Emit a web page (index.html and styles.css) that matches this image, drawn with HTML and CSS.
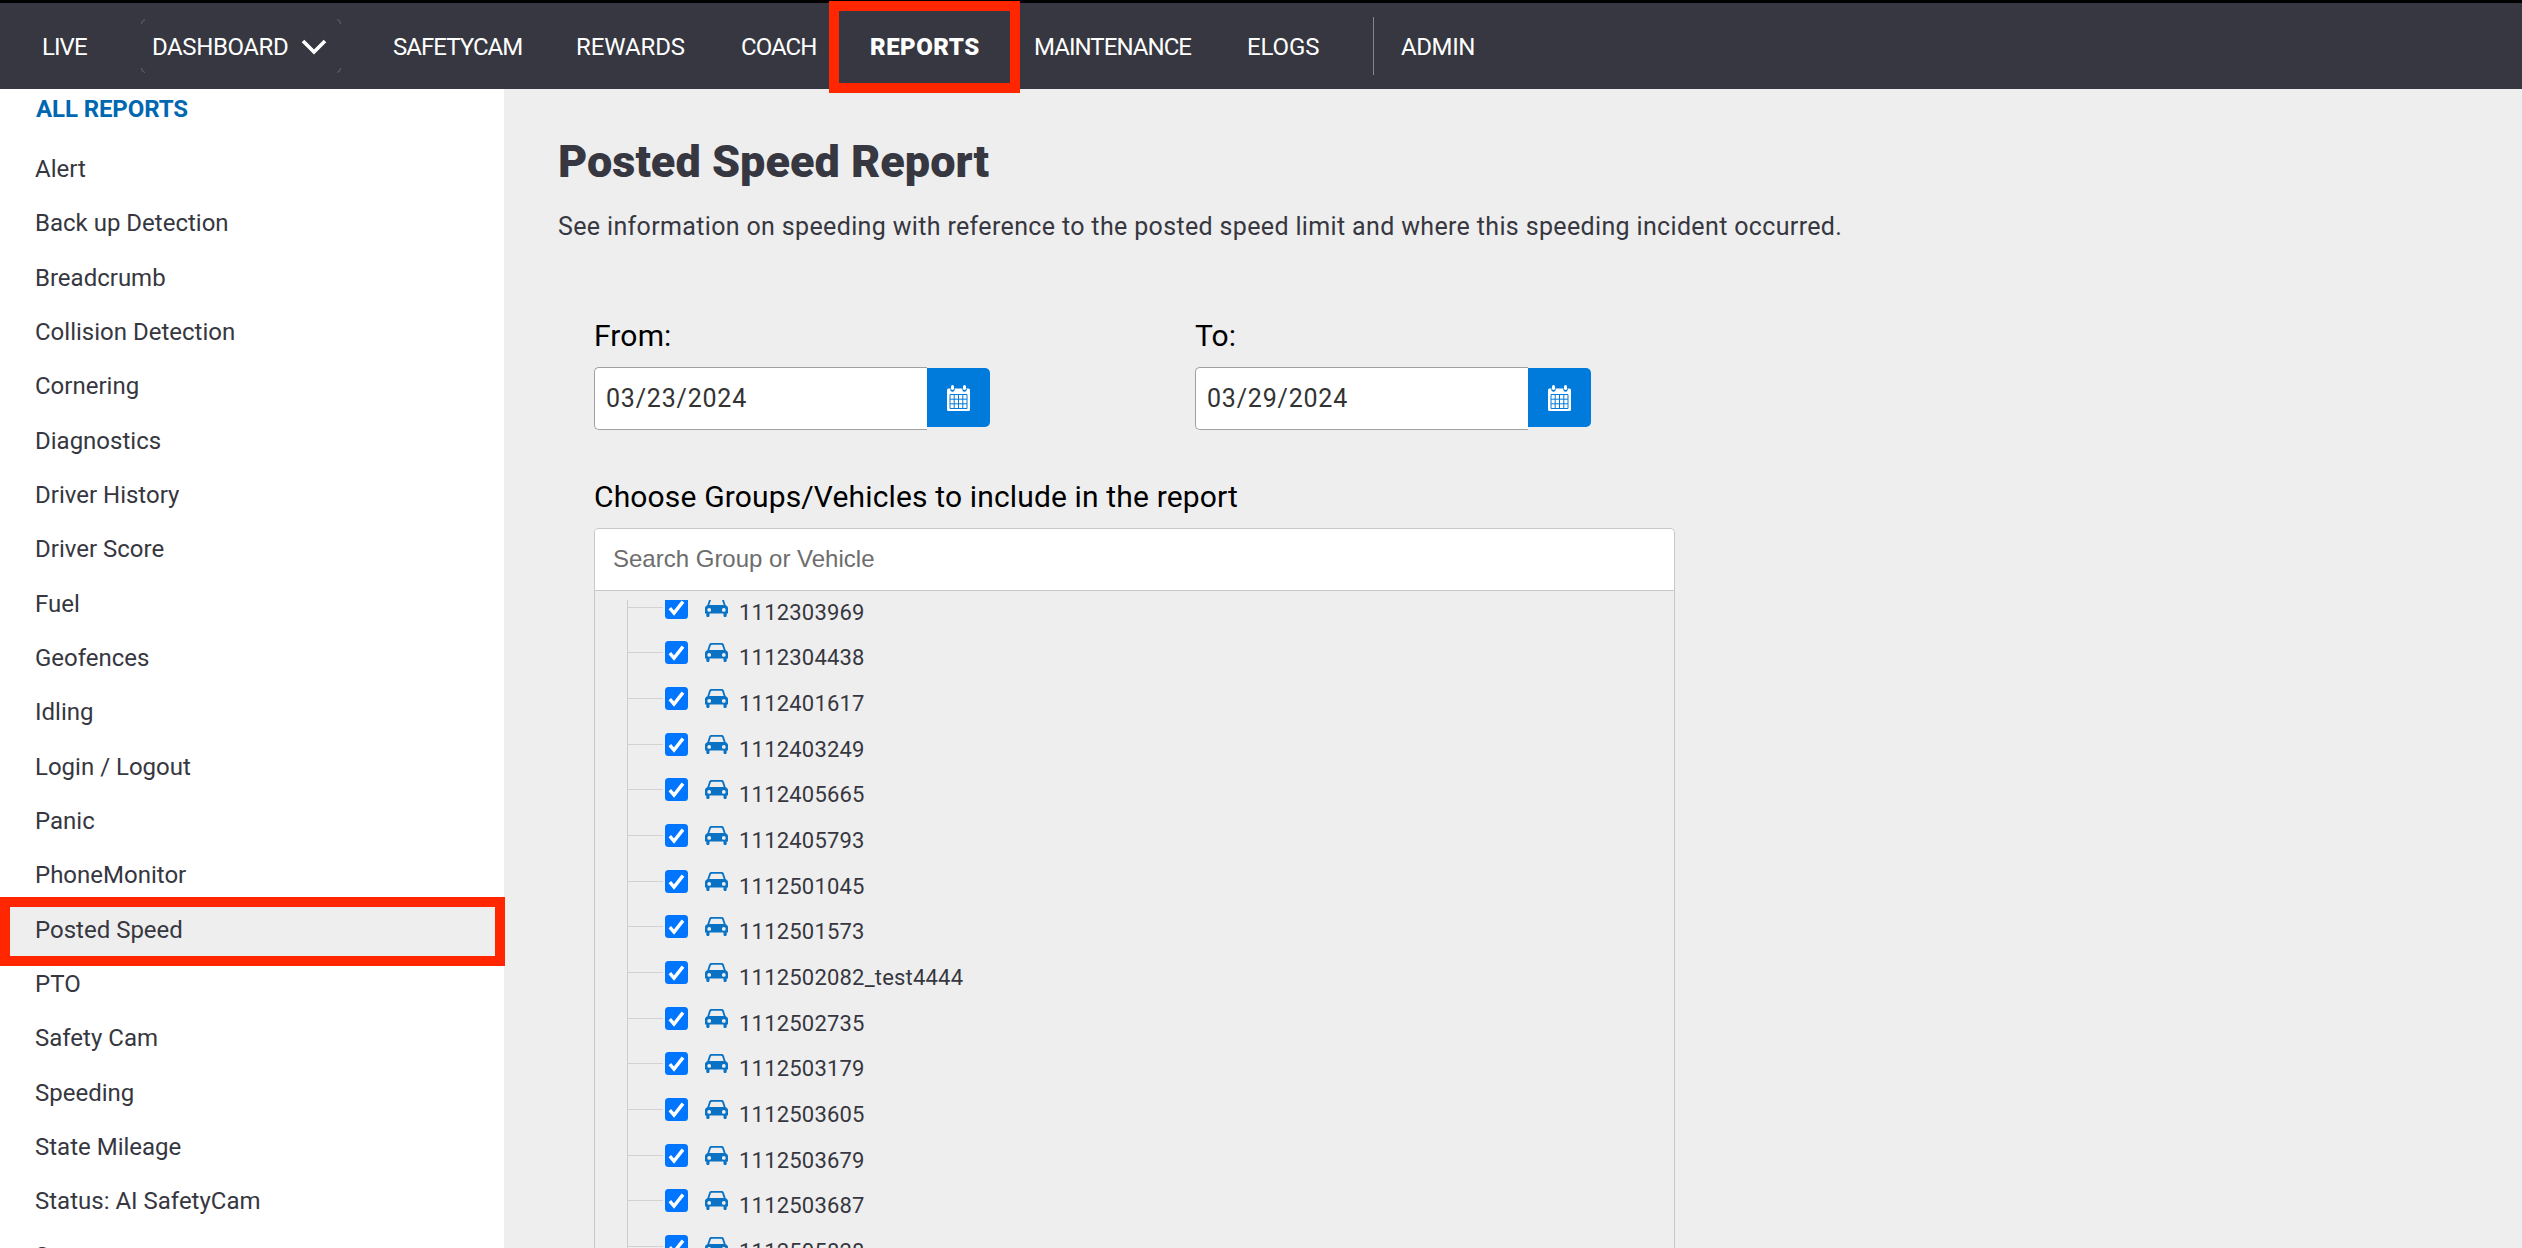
FILE: index.html
```html
<!DOCTYPE html>
<html lang="en">
<head>
    <meta charset="UTF-8">
    <meta name="viewport" content="width=device-width, initial-scale=1.0">
    <title>Posted Speed Report</title>
    <link rel="stylesheet" href="styles.css">
</head>
<body>
    <!-- Shared icons -->
    <svg class="icon-defs" width="0" height="0">
        <symbol id="icon-check" viewBox="0 0 23 23">
            <rect width="23" height="23" rx="3.5" fill="#0075ff"/>
            <path d="M4.8 12.2l4.2 4.8L18 5.6" fill="none" stroke="#fff" stroke-width="3.4"/>
        </symbol>
        <symbol id="icon-car" viewBox="0 0 23 19">
            <path fill="#0972c4" fill-rule="evenodd" d="M6.500 0h10c1.300 0 2 .6 2.400 1.800L20.700 7.300c1.500.6 2.300 1.600 2.300 3V15.500h-1.300v2a1.500 1.500 0 0 1-3.200 0v-2h-14v2a1.500 1.500 0 0 1-3.200 0v-2H0v-5.200c0-1.400.8-2.400 2.300-3L4.100 1.800C4.500.6 5.200 0 6.500 0zm.2 1.700-.8.6L4.300 7h14.400l-1.600-4.700-.8-.6zM4.200 10a1.900 1.900 0 1 0 0 3.800 1.900 1.900 0 0 0 0-3.800zm14.600 0a1.900 1.900 0 1 0 0 3.800 1.900 1.900 0 0 0 0-3.800z"/>
        </symbol>
        <symbol id="icon-calendar" viewBox="0 0 23 26">
            <rect y="3.500" width="23" height="22.500" rx="1.500" fill="#fff"/>
            <circle cx="5.500" cy="4.500" r="2.200" fill="#007bdb"/>
            <circle cx="17.500" cy="4.500" r="2.200" fill="#007bdb"/>
            <rect x="4" width="3" height="5" rx="1.500" fill="#fff"/>
            <rect x="16" width="3" height="5" rx="1.500" fill="#fff"/>
            <path d="M3 9.500h17v14H3zM7.200 9.500v14M11.500 9.500v14M15.800 9.500v14M3 14.200h17M3 18.800h17" fill="none" stroke="#007bdb"/>
        </symbol>
    </svg>

    <header class="topbar">
        <nav class="nav">
            <a class="nav-link tight">LIVE</a>
            <a class="nav-link dropdown">DASHBOARD
                <svg class="chevron" width="26" height="16" viewBox="0 0 26 16"><path d="M2 2l11 11L24 2" fill="none" stroke="#fff" stroke-width="3.600"/></svg>
                <svg class="dropdown-corners" width="200" height="54" viewBox="0 0 200 54"><path d="M.5 5Q.5 1 4 .5M196 .5q3.500.5 3.500 4.500M.5 49q0 4 3.500 4.500M196 53.500q3.500-.5 3.500-4.500" fill="none" stroke="#64656e"/></svg>
            </a>
            <a class="nav-link tight">SAFETYCAM</a>
            <a class="nav-link wide">REWARDS</a>
            <a class="nav-link tight">COACH</a>
            <a class="nav-link active">REPORTS</a>
            <a class="nav-link tight">MAINTENANCE</a>
            <a class="nav-link wide">ELOGS</a>
            <a class="nav-link admin">ADMIN</a>
        </nav>
    </header>

    <div class="layout">
        <aside class="sidebar">
            <h2 class="sidebar-title">ALL REPORTS</h2>
            <ul class="report-list">
                <li>Alert</li>
                <li>Back up Detection</li>
                <li>Breadcrumb</li>
                <li>Collision Detection</li>
                <li>Cornering</li>
                <li>Diagnostics</li>
                <li>Driver History</li>
                <li>Driver Score</li>
                <li>Fuel</li>
                <li>Geofences</li>
                <li>Idling</li>
                <li>Login / Logout</li>
                <li>Panic</li>
                <li>PhoneMonitor</li>
                <li class="selected">Posted Speed</li>
                <li>PTO</li>
                <li>Safety Cam</li>
                <li>Speeding</li>
                <li>State Mileage</li>
                <li>Status: AI SafetyCam</li>
                <li>Summary</li>
            </ul>
        </aside>

        <main class="content">
            <h1 class="page-title">Posted Speed Report</h1>
            <p class="description">See information on speeding with reference to the posted speed limit and where this speeding incident occurred.</p>

            <div class="filters">
                <div class="date-row">
                    <div class="field">
                        <label class="label" for="from-date">From:</label>
                        <div class="date-picker">
                            <input class="date-input" id="from-date" type="text" value="03/23/2024">
                            <button class="date-button"><svg width="23" height="26"><use href="#icon-calendar"/></svg></button>
                        </div>
                    </div>
                    <div class="field">
                        <label class="label" for="to-date">To:</label>
                        <div class="date-picker">
                            <input class="date-input" id="to-date" type="text" value="03/29/2024">
                            <button class="date-button"><svg width="23" height="26"><use href="#icon-calendar"/></svg></button>
                        </div>
                    </div>
                </div>

                <label class="label choose" for="search">Choose Groups/Vehicles to include in the report</label>
                <div class="picker">
                    <input class="search" id="search" type="text" placeholder="Search Group or Vehicle">
                    <div class="tree">
                        <ul class="vehicles">
                            <li><svg class="check"><use href="#icon-check"/></svg><svg class="car"><use href="#icon-car"/></svg><span>1112303969</span></li>
                            <li><svg class="check"><use href="#icon-check"/></svg><svg class="car"><use href="#icon-car"/></svg><span>1112304438</span></li>
                            <li><svg class="check"><use href="#icon-check"/></svg><svg class="car"><use href="#icon-car"/></svg><span>1112401617</span></li>
                            <li><svg class="check"><use href="#icon-check"/></svg><svg class="car"><use href="#icon-car"/></svg><span>1112403249</span></li>
                            <li><svg class="check"><use href="#icon-check"/></svg><svg class="car"><use href="#icon-car"/></svg><span>1112405665</span></li>
                            <li><svg class="check"><use href="#icon-check"/></svg><svg class="car"><use href="#icon-car"/></svg><span>1112405793</span></li>
                            <li><svg class="check"><use href="#icon-check"/></svg><svg class="car"><use href="#icon-car"/></svg><span>1112501045</span></li>
                            <li><svg class="check"><use href="#icon-check"/></svg><svg class="car"><use href="#icon-car"/></svg><span>1112501573</span></li>
                            <li><svg class="check"><use href="#icon-check"/></svg><svg class="car"><use href="#icon-car"/></svg><span>1112502082_test4444</span></li>
                            <li><svg class="check"><use href="#icon-check"/></svg><svg class="car"><use href="#icon-car"/></svg><span>1112502735</span></li>
                            <li><svg class="check"><use href="#icon-check"/></svg><svg class="car"><use href="#icon-car"/></svg><span>1112503179</span></li>
                            <li><svg class="check"><use href="#icon-check"/></svg><svg class="car"><use href="#icon-car"/></svg><span>1112503605</span></li>
                            <li><svg class="check"><use href="#icon-check"/></svg><svg class="car"><use href="#icon-car"/></svg><span>1112503679</span></li>
                            <li><svg class="check"><use href="#icon-check"/></svg><svg class="car"><use href="#icon-car"/></svg><span>1112503687</span></li>
                            <li><svg class="check"><use href="#icon-check"/></svg><svg class="car"><use href="#icon-car"/></svg><span>1112505828</span></li>
                        </ul>
                    </div>
                </div>
            </div>
        </main>
    </div>
</body>
</html>
```
FILE: styles.css
```css
*,
*::before {
    box-sizing: border-box;
}

body {
    margin: 0;
    height: 100vh;
    overflow: hidden;
    display: flex;
    flex-direction: column;
    font-family: Roboto, "Liberation Sans", sans-serif;
    background-color: #eeeeee;
    color: #363740;
}

ul {
    list-style: none;
    margin: 0;
    padding: 0;
}

.icon-defs {
    position: absolute;
}

/* Top navigation */
.topbar {
    flex: none;
    height: 89px;
    border-top: 3px solid #000000;
    background-color: #363740;
}

.nav {
    display: grid;
    grid-template-columns: 110px 241px 183px 165px 129px 164px 213px 154px 120px;
    height: 86px;
    padding-left: 42px;
}

.nav-link {
    position: relative;
    display: flex;
    align-items: center;
    padding-top: 1px;
    font-size: 24px;
    letter-spacing: -0.4px;
    color: #ffffff;
    white-space: nowrap;
}

.tight {
    letter-spacing: -0.95px;
}

.wide {
    letter-spacing: -0.1px;
}

.chevron {
    margin-left: 13px;
}

.dropdown-corners {
    position: absolute;
    left: -11px;
    top: 16px;
}

.active {
    font-weight: 900;
    letter-spacing: 0.5px;
}

/* Highlight frame around the current section */
.active::before {
    content: "";
    position: absolute;
    left: -41px;
    top: -2px;
    width: 191px;
    height: 92px;
    border: 10px solid #ff2600;
}

.admin::before {
    content: "";
    position: absolute;
    left: -28px;
    top: 14px;
    height: 58px;
    border-left: 1px solid #85868c;
}

.layout {
    flex: 1;
    min-height: 0;
    display: flex;
}

/* Sidebar */
.sidebar {
    flex: none;
    width: 504px;
    background-color: #ffffff;
}

.sidebar-title {
    margin: 0;
    padding: 5px 0 0 36px;
    height: 53px;
    font-size: 24px;
    line-height: 30px;
    letter-spacing: -0.1px;
    color: #0067b1;
}

.report-list li {
    position: relative;
    height: 54.33px;
    padding-left: 35px;
    font-size: 24px;
    line-height: 54px;
}

.report-list .selected {
    background-color: #eeeeee;
}

.selected::before {
    content: "";
    position: absolute;
    left: 0;
    top: -6px;
    width: 505px;
    height: 69px;
    border: 10px solid #ff2600;
}

/* Report page */
.content {
    flex: 1;
    display: flex;
    flex-direction: column;
    padding: 46px 0 0 54px;
}

.page-title {
    margin: 0;
    font-size: 45px;
    font-weight: 900;
    line-height: 54px;
}

.description {
    margin: 22px 0 0;
    font-size: 25px;
    line-height: 32px;
    letter-spacing: 0.35px;
}

.filters {
    flex: 1;
    min-height: 0;
    display: flex;
    flex-direction: column;
    padding: 75px 0 0 36px;
}

.date-row {
    display: flex;
    gap: 205px;
}

.label {
    display: block;
    font-size: 30px;
    line-height: 36px;
    letter-spacing: 0.15px;
    color: #000000;
}

.date-picker {
    display: flex;
    align-items: flex-start;
    margin-top: 13px;
}

.date-input {
    width: 333px;
    height: 63px;
    padding: 0 11px;
    border: 1px solid #a0a0a0;
    border-right: none;
    border-radius: 5px 0 0 5px;
    font-family: inherit;
    font-size: 25px;
    letter-spacing: 0.8px;
    color: #333333;
}

.date-button {
    display: flex;
    align-items: center;
    justify-content: center;
    width: 63px;
    height: 59px;
    margin-top: 1px;
    padding: 0;
    border: none;
    border-radius: 0 5px 5px 0;
    background-color: #007bdb;
}

.choose {
    margin-top: 49px;
}

.picker {
    flex: 1;
    min-height: 0;
    display: flex;
    flex-direction: column;
    width: 1081px;
    margin-top: 13px;
    border: 1px solid #c8c8c8;
    border-bottom: none;
    border-radius: 5px 5px 0 0;
    overflow: hidden;
}

.search {
    flex: none;
    height: 62px;
    padding: 0 18px 1px;
    border: none;
    border-bottom: 1px solid #c8c8c8;
    font-family: "Liberation Sans", Arial, sans-serif;
    font-size: 24px;
}

.search::placeholder {
    color: #6d6d6d;
}

.tree {
    flex: 1;
    min-height: 0;
    margin-top: 9px;
    overflow: hidden;
}

/* The list is scrolled, so the first row is partly hidden */
.vehicles {
    margin: -15.5px 0 0 32px;
    border-left: 1px solid #cccccc;
}

.vehicles li {
    display: flex;
    align-items: center;
    height: 45.67px;
    font-size: 22px;
    letter-spacing: 0.2px;
}

.vehicles li::before {
    content: "";
    width: 35px;
    border-top: 1px solid #d2d2d2;
}

.check {
    width: 23px;
    height: 23px;
    margin-left: 2px;
}

.car {
    width: 23px;
    height: 19px;
    margin-left: 17px;
}

.vehicles span {
    margin-left: 11px;
    padding-top: 10px;
}
```
